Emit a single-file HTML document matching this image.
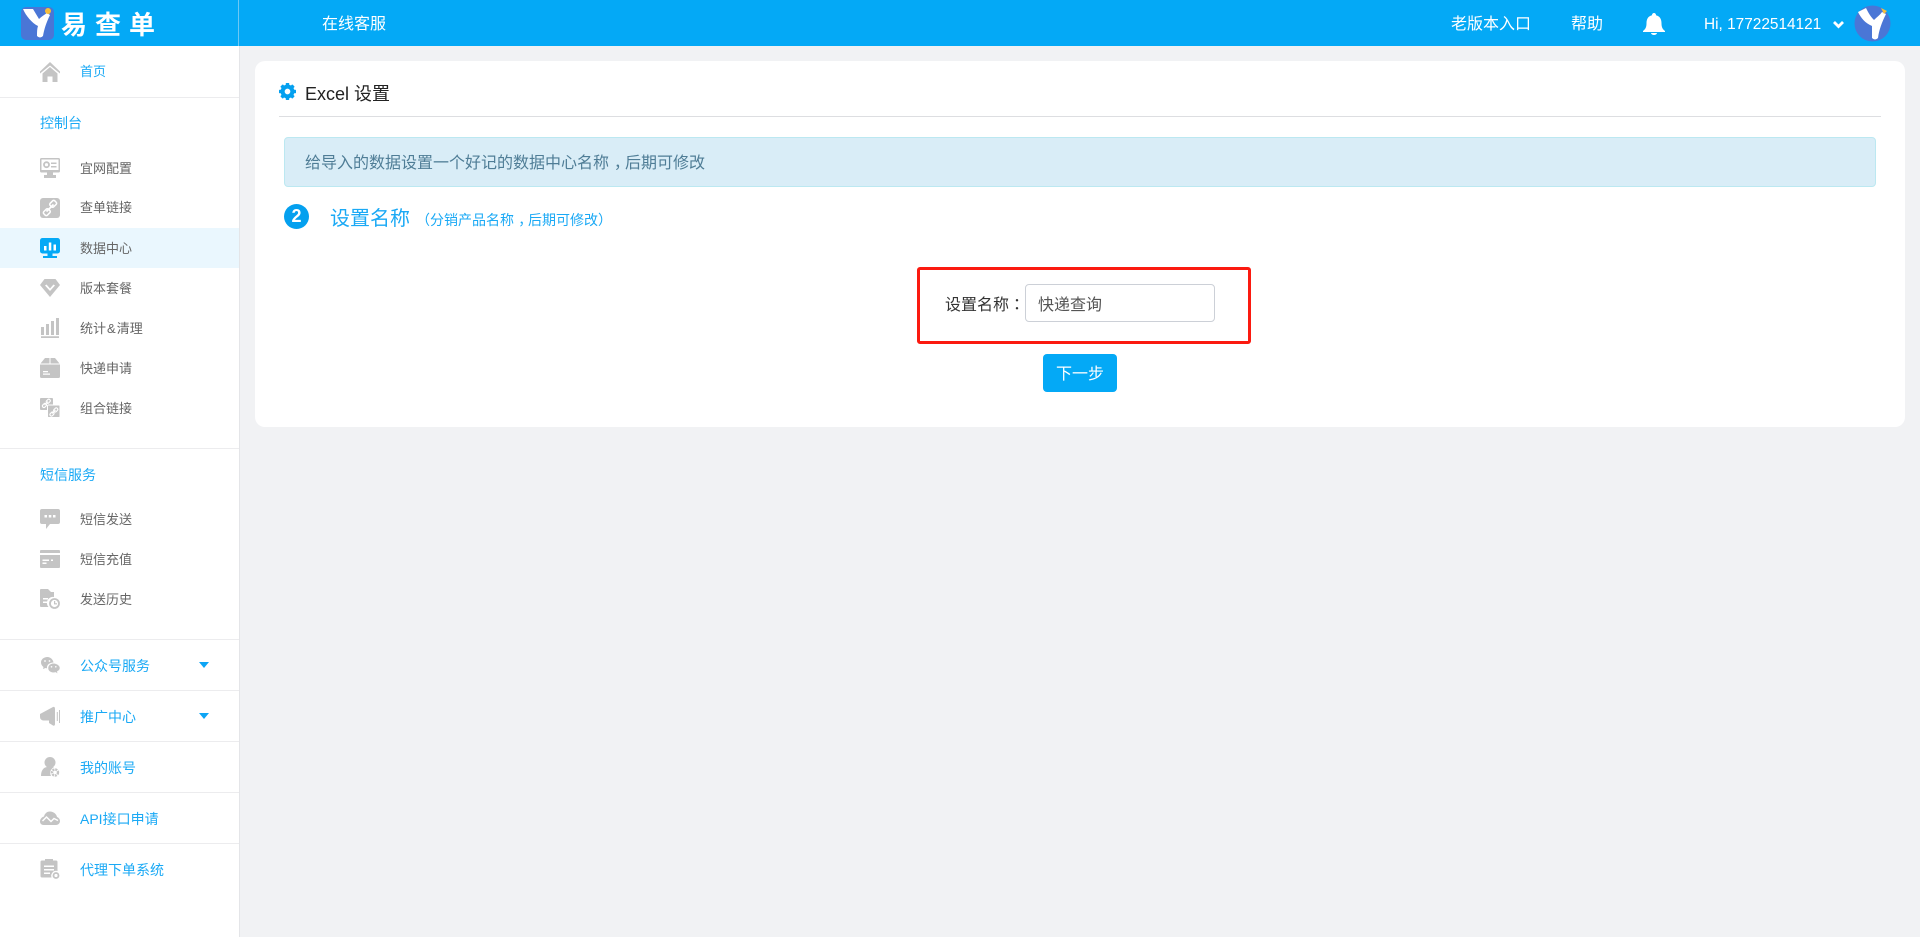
<!DOCTYPE html>
<html lang="zh-CN"><head><meta charset="utf-8"><title>易查单</title>
<style>
html,body{margin:0;padding:0;width:1920px;height:937px;overflow:hidden;background:#f1f2f4}
body{position:relative;font-family:"Liberation Sans","Noto Sans CJK SC",sans-serif;color:#333}
.a{position:absolute}
.t{position:absolute;white-space:nowrap;line-height:20px;height:20px;font-size:13px;color:#666}
.b{color:#1aa9f5}
.w{color:#fff}
.p{font-family:"Liberation Sans","Noto Sans CJK TC",sans-serif}
.m{position:relative;left:.3em}
.s{position:absolute;left:0;width:239px;height:1px;background:#ececee}
svg.i{position:absolute;left:40px;width:20px;height:20px;fill:#c4c4c4}
.c{position:absolute;left:731px;width:0;height:0;border-left:5px solid transparent;border-right:5px solid transparent;border-top:6px solid #0ea5f5}
</style></head><body>
<div class="a" style="left:0;top:0;width:1920px;height:46px;background:#04a9f6"></div>
<div class="a" style="left:238px;top:0;width:1px;height:46px;background:#6cc8f5"></div>

<svg class="a" style="left:20px;top:6px" width="35" height="35" viewBox="0 0 35 35"><rect x="1" y="1" width="33" height="33" rx="5" fill="#4a76d6"/><path d="M3 3H13L19 13C21 11 24 9 27 7L30 9C26 17 24 24 23 30Q20 33 17 30C17 26 17 23 18 20C12 17 6 10 3 3Z" fill="#fff"/><circle cx="28" cy="5" r="3" fill="#f6bd3b"/></svg>
<div class="t w" style="left:61px;top:11px;height:28px;line-height:28px;font-size:26px;font-weight:700;letter-spacing:8px">易查单</div>
<div class="t w" style="left:322px;top:15px;font-size:16px">在线客服</div>
<div class="t w" style="left:1451px;top:15px;font-size:16px">老版本入口</div>
<div class="t w" style="left:1571px;top:15px;font-size:16px">帮助</div>
<svg class="a" style="left:1643px;top:12px" width="22" height="23" viewBox="0 0 22 23"><path fill="#fff" d="M11 1a2 2 0 0 1 2 2.300c4 1 5.500 4 5.500 8 0 4 1 5.700 3.500 7.700v1H0v-1c2.500-2 3.500-3.700 3.500-7.700 0-4 1.500-7 5.500-8A2 2 0 0 1 11 1zM8 21h6a3 2 0 0 1-6 0z"/></svg>
<div class="t w" style="left:1704px;top:15px;font-size:15.400px">Hi, 17722514121</div>
<svg class="a" style="left:1832px;top:20px" width="13" height="9" viewBox="0 0 13 9"><path d="M2 2L6.500 6.500L11 2" fill="none" stroke="#fff" stroke-width="2.800"/></svg>
<svg class="a" style="left:1854px;top:5px" width="37" height="37" viewBox="0 0 37 37"><circle cx="18.500" cy="18.500" r="18" fill="#4a76d6"/><path d="M4 7L12 3C14 7 16 11 20 15C23 12 26 10 28 7L32 9C28 17 25 25 24 33Q21 36 18 33C18 28 18 24 18 21C11 18 7 13 4 7Z" fill="#fff"/><path d="M27 3L33 6L30 9Z" fill="#f6bd3b"/></svg>

<div class="a" style="left:0;top:46px;width:239px;height:891px;background:#fff;border-right:1px solid #e4e5e8"></div>
<div class="a" style="left:0;top:228px;width:239px;height:40px;background:#eaf7fe"></div>
<div class="s" style="top:97px"></div><div class="s" style="top:448px"></div><div class="s" style="top:639px"></div><div class="s" style="top:690px"></div><div class="s" style="top:741px"></div><div class="s" style="top:792px"></div><div class="s" style="top:843px"></div>

<svg class="i" style="top:62px" viewBox="0 0 20 20"><path d="M10 0L20 9.500V11.500L10 3.500L0 11.500V9.500Z"/><path d="M2.500 11.500L10 5L17.500 11.500V20H12.500V14.500H7.500V20H2.500Z"/></svg>
<div class="t b" style="left:80px;top:62px">首页</div>
<div class="t b" style="left:40px;top:113px;font-size:14px">控制台</div>

<svg class="i" style="top:158px" viewBox="0 0 20 20"><path fill-rule="evenodd" d="M1.500 0H18.500A1.500 1.500 0 0 1 20 1.500V13A1.500 1.500 0 0 1 18.500 14.500H1.500A1.500 1.500 0 0 1 0 13V1.500A1.500 1.500 0 0 1 1.500 0ZM1.500 1.500V12H18.500V1.500Z"/><path d="M7 14.500H13V17H16V20H4V17H7Z"/><circle cx="6.500" cy="6.700" r="2.500" fill="none" stroke="#c4c4c4" stroke-width="1.800"/><path d="M11 4.500H16.500V6H11ZM11 8H16.500V9.500H11Z"/></svg>
<div class="t" style="left:80px;top:159px">宜网配置</div>

<svg class="i" style="top:198px" viewBox="0 0 20 20"><rect width="20" height="20" rx="3"/><path d="M6.500 13.500L13.500 6.500" stroke="#fff" stroke-width="1.800"/><rect x="10" y="3.500" width="6.500" height="5" rx="1.500" transform="rotate(-45 13 6)" fill="none" stroke="#fff" stroke-width="1.500"/><rect x="3.500" y="11.500" width="6.500" height="5" rx="1.500" transform="rotate(-45 7 14)" fill="none" stroke="#fff" stroke-width="1.500"/></svg>
<div class="t" style="left:80px;top:198px">查单链接</div>

<svg class="i" style="top:238px;fill:#04a9f6" viewBox="0 0 20 20"><rect width="20" height="15.500" rx="2.500"/><rect x="3" y="18" width="14" height="2"/><rect x="7.500" y="15.500" width="5" height="3"/><path fill="#fff" d="M4 8H6.500V12.500H4ZM8.800 4.500H11.300V12.500H8.800ZM13.500 6.500H16V12.500H13.500Z"/></svg>
<div class="t" style="left:80px;top:239px">数据中心</div>

<svg class="i" style="top:278px" viewBox="0 0 20 20"><path fill-rule="evenodd" d="M4.500 1H15.500L20 7L10 19L0 7ZM5 7.500L10 13L15 7.500L13.500 6.500L10 10.500L6.500 6.500Z"/></svg>
<div class="t" style="left:80px;top:279px">版本套餐</div>

<svg class="i" style="top:318px" viewBox="0 0 20 20"><path d="M1 9H4V17H1ZM6 6H9V17H6ZM11 3H14V17H11ZM16 0H19V17H16ZM1 18.300H19V20H1Z"/></svg>
<div class="t" style="left:80px;top:319px">统计<span style="padding:0 1px">&amp;</span>清理</div>

<svg class="i" style="top:358px" viewBox="0 0 20 20"><path d="M5 0H9.500V5.500H0.500ZM10.500 0H15L19.500 5.500H10.500ZM0 6.500H20V18.500A1.500 1.500 0 0 1 18.500 20H1.500A1.500 1.500 0 0 1 0 18.500Z"/><path fill="#fff" d="M3 13H8V14.300H3ZM3 15.500H10V16.800H3Z"/></svg>
<div class="t" style="left:80px;top:359px">快递申请</div>

<svg class="i" style="top:398px" viewBox="0 0 20 20"><rect x="0" y="0" width="13" height="12" rx="1"/><rect x="7.500" y="7" width="12.500" height="12.500" rx="1" stroke="#fff" stroke-width="1"/><g fill="none" stroke="#fff" stroke-width="1.100"><path d="M4.500 7L8 3.500"/><rect x="6" y="1.800" width="4.500" height="3" rx="1.500" transform="rotate(-45 8.200 3.300)"/><rect x="2.200" y="6" width="4.500" height="3" rx="1.500" transform="rotate(-45 4.400 7.500)"/><path d="M12 15.500L15.500 12"/><rect x="13.500" y="10.500" width="4.500" height="3" rx="1.500" transform="rotate(-45 15.700 12)"/><rect x="9.700" y="14.500" width="4.500" height="3" rx="1.500" transform="rotate(-45 12 16)"/></g></svg>
<div class="t" style="left:80px;top:399px">组合链接</div>

<div class="t b" style="left:40px;top:465px;font-size:14px">短信服务</div>

<svg class="i" style="top:509px" viewBox="0 0 20 20"><path d="M2 0H18A2 2 0 0 1 20 2V13A2 2 0 0 1 18 15H10L6 20V15H2A2 2 0 0 1 0 13V2A2 2 0 0 1 2 0Z"/><path fill="#fff" d="M4.500 6H7V8.500H4.500ZM8.800 6H11.300V8.500H8.800ZM13 6H15.500V8.500H13Z"/></svg>
<div class="t" style="left:80px;top:510px">短信发送</div>

<svg class="i" style="top:549px" viewBox="0 0 20 20"><path d="M1 1H19A1 1 0 0 1 20 2V4H0V2A1 1 0 0 1 1 1ZM0 6H20V18A1 1 0 0 1 19 19H1A1 1 0 0 1 0 18Z"/><path fill="#fff" d="M2.500 10.500H9V12H2.500ZM2.500 13.500H6.500V15H2.500ZM11 10.500H13V12H11Z"/></svg>
<div class="t" style="left:80px;top:550px">短信充值</div>

<svg class="i" style="top:589px" viewBox="0 0 20 20"><path d="M1 0H8L11 3H14V8A6 6 0 0 0 8.500 18H1A1 1 0 0 1 0 17V1A1 1 0 0 1 1 0Z"/><path fill="#fff" d="M3 9H8V10.500H3ZM3 12.500H7V14H3Z"/><circle cx="14.500" cy="14.500" r="4.500" fill="none" stroke="#c4c4c4" stroke-width="1.800"/><path d="M14 12H15.200V14.200H17V15.400H14Z"/></svg>
<div class="t" style="left:80px;top:590px">发送历史</div>

<svg class="i" style="top:655px" viewBox="0 0 20 20"><path d="M7.500 2C3.500 2 1 4.500 1 7.500C1 9.500 2 10.800 3.500 12L3 14L5.500 13C6 13.200 6.500 13.300 7 13.300C6.500 10 9.500 7.500 13.500 7.500C13 4.500 10.500 2 7.500 2Z"/><path d="M13.500 8.300C10.500 8.300 8 10.500 8 13.100C8 15.700 10.500 17.700 13.500 17.700C14 17.700 15 17.500 15.500 17.400L17.800 18.700L17.200 16.500C18.700 15.700 20 14.600 20 13.100C20 10.500 16.500 8.300 13.500 8.300Z" stroke="#fff" stroke-width=".5"/><circle cx="5" cy="6" r=".9" fill="#fff"/><circle cx="9.500" cy="6" r=".9" fill="#fff"/><circle cx="11.500" cy="11.800" r=".8" fill="#fff"/><circle cx="15.800" cy="11.800" r=".8" fill="#fff"/></svg>
<div class="t b" style="left:80px;top:656px;font-size:14px">公众号服务</div>
<div class="c" style="left:199px;top:662px"></div>

<svg class="i" style="top:706px" viewBox="0 0 20 20"><path d="M0 8L13 1C14.500 .500 15 1.500 15 3V18C15 19.500 14 20 13 19.500L9 17V14.500H3.500A3.500 3.500 0 0 1 0 11Z"/><path d="M16.800 6H17.800V15H16.800ZM19 4H20V17H19Z"/></svg>
<div class="t b" style="left:80px;top:707px;font-size:14px">推广中心</div>
<div class="c" style="left:199px;top:713px"></div>

<svg class="i" style="top:757px" viewBox="0 0 20 20"><circle cx="10" cy="5.500" r="5.500"/><path d="M1 19C1 14 3 10.500 7 10H14C11 12 9 15 11 19Z"/><circle cx="15" cy="15.500" r="3" fill="none" stroke="#c4c4c4" stroke-width="2.400" stroke-dasharray="2 .8"/></svg>
<div class="t b" style="left:80px;top:758px;font-size:14px">我的账号</div>

<svg class="i" style="top:808px" viewBox="0 0 20 20"><path d="M3.500 17H16C18.500 17 20 15 20 13C20 11 18.500 9.500 17 9C16.500 6 13.500 3.500 10 3.500C6.500 3.500 4.500 6 4 8.500C2 9 0 11 0 13.500C0 15.500 1.500 17 3.500 17Z"/><path d="M2.500 13L6.500 9L11 13.500L14 10.500L18 12.500" fill="none" stroke="#fff" stroke-width="1.500"/></svg>
<div class="t b" style="left:80px;top:809px;font-size:14px">API接口申请</div>

<svg class="i" style="top:859px" viewBox="0 0 20 20"><path d="M2 1.500H5V0H13V1.500H16A1.500 1.500 0 0 1 17.500 3V12A5 5 0 0 0 11.500 18.500H2A1.500 1.500 0 0 1 .500 17V3A1.500 1.500 0 0 1 2 1.500Z"/><path fill="#fff" d="M4 6.500H14V8H4ZM4 10H14V11.500H4ZM4 13.500H10V15H4Z"/><circle cx="16" cy="16.500" r="2.500" fill="none" stroke="#c4c4c4" stroke-width="1.800"/></svg>
<div class="t b" style="left:80px;top:860px;font-size:14px">代理下单系统</div>

<div class="a" style="left:255px;top:61px;width:1650px;height:366px;background:#fff;border-radius:10px"></div>
<svg class="a" style="left:279px;top:83px" width="17" height="17" viewBox="0 0 24 24"><circle cx="12" cy="12" r="7" fill="none" stroke="#04a0ef" stroke-width="5.500"/><g fill="#04a0ef"><rect x="9.500" y="0" width="5" height="24" rx="1"/><rect x="9.500" y="0" width="5" height="24" rx="1" transform="rotate(45 12 12)"/><rect x="9.500" y="0" width="5" height="24" rx="1" transform="rotate(90 12 12)"/><rect x="9.500" y="0" width="5" height="24" rx="1" transform="rotate(135 12 12)"/></g><circle cx="12" cy="12" r="4" fill="#fff"/></svg>
<div class="t" style="left:305px;top:83px;height:22px;line-height:22px;font-size:18px;color:#222">Excel 设置</div>
<div class="a" style="left:279px;top:116px;width:1602px;height:1px;background:#dddee1"></div>
<div class="a" style="left:284px;top:137px;width:1590px;height:48px;background:#d9edf7;border:1px solid #bce8f1;border-radius:4px"></div>
<div class="t" style="left:305px;top:154px;font-size:16px;color:#4f7d96">给导入的数据设置一个好记的数据中心名称<span class="m">，</span>后期可修改</div>
<div class="a" style="left:284px;top:204px;width:25px;height:25px;border-radius:50%;background:#04a0ef;color:#fff;font-weight:700;font-size:18px;line-height:25px;text-align:center">2</div>
<div class="t b" style="left:330px;top:206px;height:26px;line-height:26px;font-size:20px">设置名称</div>
<div class="t b" style="left:416px;top:208px;height:24px;line-height:24px;font-size:14px"><span class="p" lang="zh-TW">（</span>分销产品名称<span class="m">，</span>后期可修改<span class="p" lang="zh-TW">）</span></div>

<div class="a" style="left:917px;top:267px;width:328px;height:71px;border:3px solid #fb1a10;border-radius:3px"></div>
<div class="t" style="left:945px;top:296px;font-size:16px;color:#333">设置名称<span class="p" lang="zh-TW">：</span></div>
<div class="a" style="left:1025px;top:284px;width:188px;height:36px;border:1px solid #ccd0d7;border-radius:4px"></div>
<div class="t" style="left:1038px;top:296px;font-size:16px;color:#555">快递查询</div>
<div class="a" style="left:1043px;top:354px;width:74px;height:38px;background:#04a9f6;border-radius:4px"></div>
<div class="t w" style="left:1056px;top:365px;font-size:16px">下一步</div>
</body></html>
